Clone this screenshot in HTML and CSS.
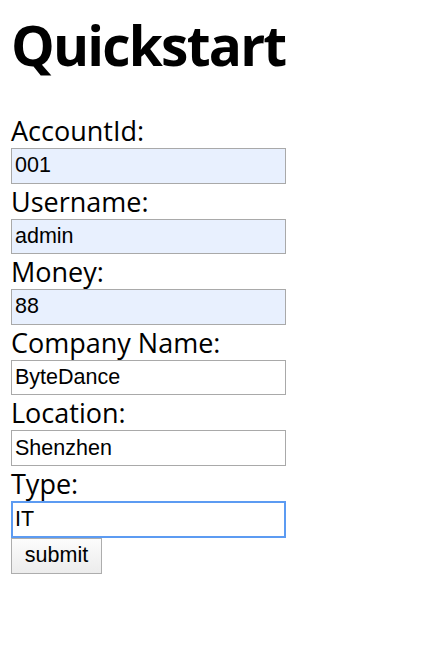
FILE: index.html
```html
<!DOCTYPE html>
<html>
<head>
<meta charset="utf-8">
<link rel="stylesheet" href="styles.css">
</head>
<body>
<h1 class="title">Quickstart</h1>
<form class="form">
  <label class="label">AccountId:</label>
  <input class="field autofill" type="text" value="001">
  <label class="label">Username:</label>
  <input class="field autofill" type="text" value="admin">
  <label class="label">Money:</label>
  <input class="field autofill" type="text" value="88">
  <label class="label">Company Name:</label>
  <input class="field" type="text" value="ByteDance">
  <label class="label">Location:</label>
  <input class="field" type="text" value="Shenzhen">
  <label class="label">Type:</label>
  <input class="field focused" type="text" value="IT">
  <button class="submit" type="button">submit</button>
</form>
</body>
</html>
```
FILE: styles.css
```css
html, body {
  margin: 0;
  padding: 0;
  background: #fff;
}
body {
  padding: 0 11px;
  font-family: "Open Sans", "Noto Sans", sans-serif;
  color: #000;
}
.title {
  margin: 0;
  padding-top: 10px;
  height: 103px;
  font-size: 55px;
  line-height: 70px;
  font-weight: 700;
  letter-spacing: -1.8px;
}
.form {
  display: flex;
  flex-direction: column;
  align-items: flex-start;
}
.label {
  display: block;
  font-size: 27px;
  line-height: 35px;
  height: 35px;
}
.field {
  box-sizing: border-box;
  width: 275px;
  height: 35.6px;
  margin: 0;
  padding: 0 3px;
  border: 1px solid #a9a9a9;
  border-radius: 0;
  font-family: "Liberation Sans", Arial, sans-serif;
  font-size: 21.5px;
  color: #000;
  background: #fff;
  outline: none;
}
.autofill {
  background: #e8f0fe;
}
.focused {
  height: 37px;
  border: 2px solid #5c9bf2;
  padding: 0 2px;
}
.submit {
  box-sizing: border-box;
  width: 91px;
  height: 36px;
  margin: 0;
  padding: 0;
  border: 1px solid #adadad;
  border-radius: 0;
  background: linear-gradient(#fcfcfc, #ececec);
  font-family: "Liberation Sans", Arial, sans-serif;
  font-size: 21.5px;
  color: #000;
}
```
